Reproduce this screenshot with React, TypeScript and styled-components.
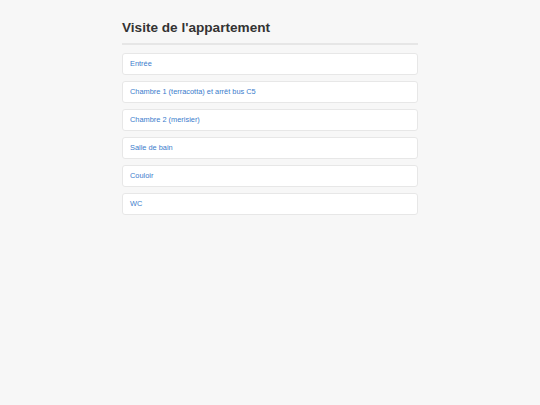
import React from "react";
import styled, { createGlobalStyle } from "styled-components";

const Global = createGlobalStyle`
  html, body { margin: 0; padding: 0; background: #f7f7f7; }
  body { font-family: "Liberation Sans", Arial, sans-serif; }
`;

const Page = styled.div`
  width: 296px;
  margin: 0 auto;
  padding-top: 18px;
`;

const Title = styled.h1`
  margin: 0;
  padding-bottom: 5px;
  font-size: 13.6px;
  line-height: 20px;
  font-weight: bold;
  color: #333;
  border-bottom: 2px solid #e6e6e6;
`;

const List = styled.div`
  display: flex;
  flex-direction: column;
  gap: 6px;
  margin-top: 8px;
`;

const Card = styled.a`
  display: block;
  height: 20px;
  line-height: 20px;
  padding: 0 7px;
  background: #fff;
  border: 1px solid #e7e7e7;
  border-radius: 3px;
  font-size: 7.4px;
  color: #3a7ccc;
  text-decoration: none;
`;

const rooms = [
  "Entrée",
  "Chambre 1 (terracotta) et arrêt bus C5",
  "Chambre 2 (merisier)",
  "Salle de bain",
  "Couloir",
  "WC",
];

export default function App() {
  return (
    <>
      <Global />
      <Page>
        <Title>Visite de l'appartement</Title>
        <List>
          {rooms.map((r) => (
            <Card key={r} href="#">{r}</Card>
          ))}
        </List>
      </Page>
    </>
  );
}
